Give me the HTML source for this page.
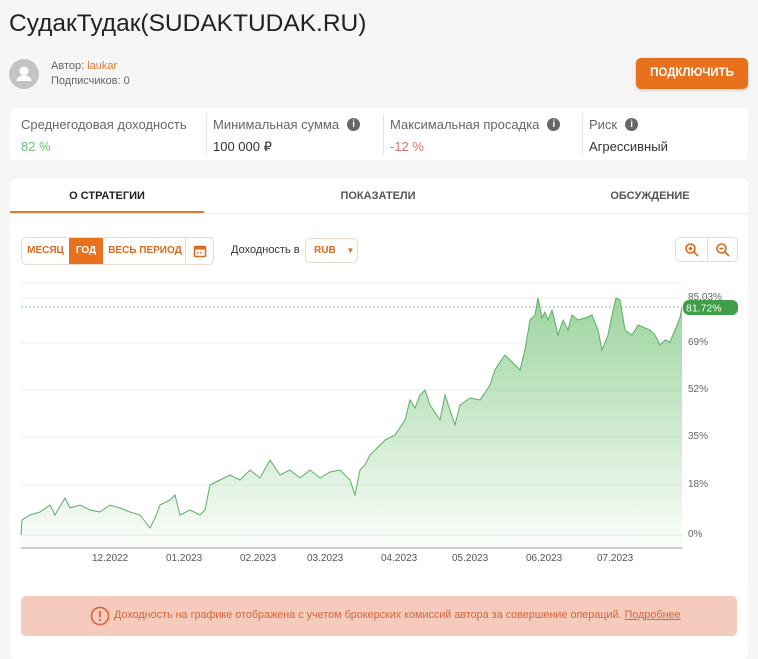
<!DOCTYPE html><html><head><meta charset="utf-8"><style>
*{box-sizing:border-box;margin:0;padding:0}
body{width:758px;height:646px;background:#f6f6f6;font-family:"Liberation Sans",sans-serif;position:relative;overflow:hidden;color:#333}
.a{position:absolute}
.info{display:inline-block;width:13px;height:13px;border-radius:50%;background:#666;color:#fff;font-size:10px;font-weight:bold;text-align:center;line-height:13px;vertical-align:middle;margin-left:8px}
.lbl{font-size:13px;color:#666}
.val{font-size:13px}
.sep{position:absolute;top:6px;width:1px;height:40px;background:#e5e5e5}
.tab{position:absolute;top:0;height:35px;line-height:35px;font-size:11px;font-weight:bold;text-align:center;color:#555}
.tb{position:absolute;top:0;height:26px;line-height:26px;font-size:10px;font-weight:bold;color:#d96a1e;text-align:center}
.yl{position:absolute;left:688px;font-size:10px;color:#666}
.xl{position:absolute;top:553px;font-size:10px;color:#555}
</style></head><body>
<div class="a" style="left:9px;top:10px;font-size:24.5px;color:#222">СудакТудак(SUDAKTUDAK.RU)</div>
<div class="a" style="left:9px;top:59px;width:30px;height:30px;border-radius:50%;background:#c4c4c4">
<svg width="30" height="30" viewBox="0 0 30 30"><circle cx="15" cy="12" r="4.5" fill="#fff"/><path d="M7.5 22c0-4 4-5.5 7.5-5.5s7.5 1.5 7.5 5.5z" fill="#fff"/></svg></div>
<div class="a" style="left:51px;top:60px;font-size:11px;color:#666">Автор: <span style="color:#e07a30">laukar</span></div>
<div class="a" style="left:51px;top:75px;font-size:11px;color:#666">Подписчиков: 0</div>
<div class="a" style="left:636px;top:58px;width:112px;height:31px;background:#e8711e;border-radius:5px;color:#fff;font-size:11.5px;font-weight:bold;text-align:center;line-height:31px;box-shadow:0 1px 3px rgba(0,0,0,.2)">ПОДКЛЮЧИТЬ</div>
<div class="a" style="left:10px;top:108px;width:738px;height:52px;background:#fff;border-radius:5px">
<div class="a" style="left:11px;top:8px"><span class="lbl">Среднегодовая доходность</span></div>
<div class="a val" style="left:11px;top:31px;color:#6cbf73">82 %</div>
<div class="sep" style="left:196px"></div>
<div class="a" style="left:203px;top:8px"><span class="lbl">Минимальная сумма</span><span class="info">i</span></div>
<div class="a val" style="left:203px;top:31px">100 000 ₽</div>
<div class="sep" style="left:373px"></div>
<div class="a" style="left:380px;top:8px"><span class="lbl">Максимальная просадка</span><span class="info">i</span></div>
<div class="a val" style="left:380px;top:31px;color:#d9706c">-12 %</div>
<div class="sep" style="left:572px"></div>
<div class="a" style="left:579px;top:8px"><span class="lbl">Риск</span><span class="info">i</span></div>
<div class="a val" style="left:579px;top:31px">Агрессивный</div>
</div>
<div class="a" style="left:10px;top:179px;width:738px;height:480px;background:#fff;border-radius:5px">
<div class="tab" style="left:0;width:194px;color:#222">О СТРАТЕГИИ</div>
<div class="a" style="left:0;top:32px;width:194px;height:2px;background:#e07a30"></div>
<div class="tab" style="left:268px;width:200px">ПОКАЗАТЕЛИ</div>
<div class="tab" style="left:540px;width:200px">ОБСУЖДЕНИЕ</div>
<div class="a" style="left:0;top:34px;width:738px;height:1px;background:#eee"></div>
<div class="a" style="left:11px;top:58px;width:193px;height:28px;border:1px solid #f0d8c8;border-radius:5px">
<div class="tb" style="left:0;width:47px">МЕСЯЦ</div>
<div class="tb" style="left:47px;width:34px;background:#e8711e;color:#fff">ГОД</div>
<div class="tb" style="left:83px;width:80px">ВЕСЬ ПЕРИОД</div>
<div class="a" style="left:163px;top:0;width:1px;height:26px;background:#f0d8c8"></div>
<svg class="a" style="left:171px;top:6px" width="14" height="14" viewBox="0 0 14 14"><rect x="1.5" y="2.5" width="11" height="10" rx="1" fill="none" stroke="#d96a1e" stroke-width="1.5"/><rect x="1.5" y="2.5" width="11" height="3" fill="#d96a1e"/><rect x="4" y="8" width="1.5" height="1.5" fill="#d96a1e"/><rect x="7" y="8" width="1.5" height="1.5" fill="#d96a1e"/></svg>
</div>
<div class="a" style="left:221px;top:65px;font-size:11px;color:#333">Доходность в</div>
<div class="a" style="left:295px;top:59px;width:53px;height:25px;border:1px solid #f0d8c8;border-radius:5px;font-size:10px;font-weight:bold;color:#d96a1e;line-height:23px;padding-left:8px">RUB <span style="font-size:8px;margin-left:8px">▼</span></div>
<div class="a" style="left:665px;top:58px;width:63px;height:25px;border:1px solid #f0d8c8;border-radius:5px">
<div class="a" style="left:31px;top:0;width:1px;height:23px;background:#f0d8c8"></div>
<svg class="a" style="left:8px;top:4px" width="16" height="16" viewBox="0 0 16 16"><circle cx="6.5" cy="6.5" r="4.5" fill="none" stroke="#d96a1e" stroke-width="1.6"/><path d="M10 10l4 4M4.5 6.5h4M6.5 4.5v4" stroke="#d96a1e" stroke-width="1.6"/></svg>
<svg class="a" style="left:39px;top:4px" width="16" height="16" viewBox="0 0 16 16"><circle cx="6.5" cy="6.5" r="4.5" fill="none" stroke="#d96a1e" stroke-width="1.6"/><path d="M10 10l4 4M4.5 6.5h4" stroke="#d96a1e" stroke-width="1.6"/></svg>
</div>
<div class="a" style="left:11px;top:417px;width:716px;height:40px;background:#f4cbbd;border-radius:5px">
<svg class="a" style="left:69px;top:10px" width="20" height="20" viewBox="0 0 20 20"><circle cx="10" cy="10" r="8.5" fill="none" stroke="#d9663a" stroke-width="1.6"/><path d="M10 5v6" stroke="#d9663a" stroke-width="1.8"/><circle cx="10" cy="14" r="1.1" fill="#d9663a"/></svg>
<div class="a" style="left:93px;top:13px;font-size:10.8px;color:#d9663a;white-space:nowrap">Доходность на графике отображена с учетом брокерских комиссий автора за совершение операций. <u>Подробнее</u></div>
</div>
</div>
<svg class="a" style="left:0;top:0" width="758" height="646">
<defs><linearGradient id="g" x1="0" y1="0" x2="0" y2="1"><stop offset="0" stop-color="#7cc77f" stop-opacity=".75"/><stop offset="1" stop-color="#7cc77f" stop-opacity=".03"/></linearGradient></defs>
<g stroke="#ececec" stroke-width="1"><line x1="21" y1="283" x2="682" y2="283"/><line x1="21" y1="298" x2="682" y2="298"/><line x1="21" y1="343" x2="682" y2="343"/><line x1="21" y1="390" x2="682" y2="390"/><line x1="21" y1="437" x2="682" y2="437"/><line x1="21" y1="485" x2="682" y2="485"/><line x1="21" y1="535" x2="682" y2="535"/></g>
<path d="M21,548 L21,535 22,520 30,515 40,512 50,505 55,515 65,498 70,508 80,505 90,510 100,512 110,505 120,508 130,512 140,515 150,528 155,518 160,505 170,500 175,495 180,515 190,510 200,515 205,510 210,485 220,480 230,475 240,480 250,470 260,478 270,460 280,475 290,470 300,478 310,470 320,478 330,472 340,470 350,480 355,495 360,470 365,465 370,455 375,450 385,440 395,435 405,420 410,400 415,408 420,395 425,390 430,405 440,420 445,395 450,410 455,425 460,405 470,398 480,400 490,385 495,370 500,362 505,355 510,360 515,365 520,370 525,350 530,320 535,315 538,298 542,318 545,312 548,320 552,310 558,335 563,320 568,330 572,315 578,320 585,318 592,315 598,330 602,350 608,335 612,315 616,298 620,300 625,330 632,335 638,325 645,328 650,330 655,335 660,345 665,340 670,342 675,330 680,318 682,307 L682,548 Z" fill="url(#g)"/>
<polyline fill="none" stroke="#5cae62" stroke-width="1" points="21,535 22,520 30,515 40,512 50,505 55,515 65,498 70,508 80,505 90,510 100,512 110,505 120,508 130,512 140,515 150,528 155,518 160,505 170,500 175,495 180,515 190,510 200,515 205,510 210,485 220,480 230,475 240,480 250,470 260,478 270,460 280,475 290,470 300,478 310,470 320,478 330,472 340,470 350,480 355,495 360,470 365,465 370,455 375,450 385,440 395,435 405,420 410,400 415,408 420,395 425,390 430,405 440,420 445,395 450,410 455,425 460,405 470,398 480,400 490,385 495,370 500,362 505,355 510,360 515,365 520,370 525,350 530,320 535,315 538,298 542,318 545,312 548,320 552,310 558,335 563,320 568,330 572,315 578,320 585,318 592,315 598,330 602,350 608,335 612,315 616,298 620,300 625,330 632,335 638,325 645,328 650,330 655,335 660,345 665,340 670,342 675,330 680,318 682,307"/>
<line x1="21" y1="307" x2="682" y2="307" stroke="#8cc08f" stroke-dasharray="2,2"/>
<line x1="21" y1="548" x2="682" y2="548" stroke="#999"/>
<rect x="683" y="300" width="55" height="15" rx="6" fill="#3f9e48"/>
<text x="686" y="311.5" font-size="10.5" fill="#fff" font-family="Liberation Sans">81.72%</text>
</svg>
<div class="yl" style="top:292px">85.03%</div>
<div class="yl" style="top:337px">69%</div>
<div class="yl" style="top:384px">52%</div>
<div class="yl" style="top:431px">35%</div>
<div class="yl" style="top:479px">18%</div>
<div class="yl" style="top:529px">0%</div>
<div class="xl" style="left:92px">12.2022</div>
<div class="xl" style="left:166px">01.2023</div>
<div class="xl" style="left:240px">02.2023</div>
<div class="xl" style="left:307px">03.2023</div>
<div class="xl" style="left:381px">04.2023</div>
<div class="xl" style="left:452px">05.2023</div>
<div class="xl" style="left:526px">06.2023</div>
<div class="xl" style="left:597px">07.2023</div>
</body></html>
